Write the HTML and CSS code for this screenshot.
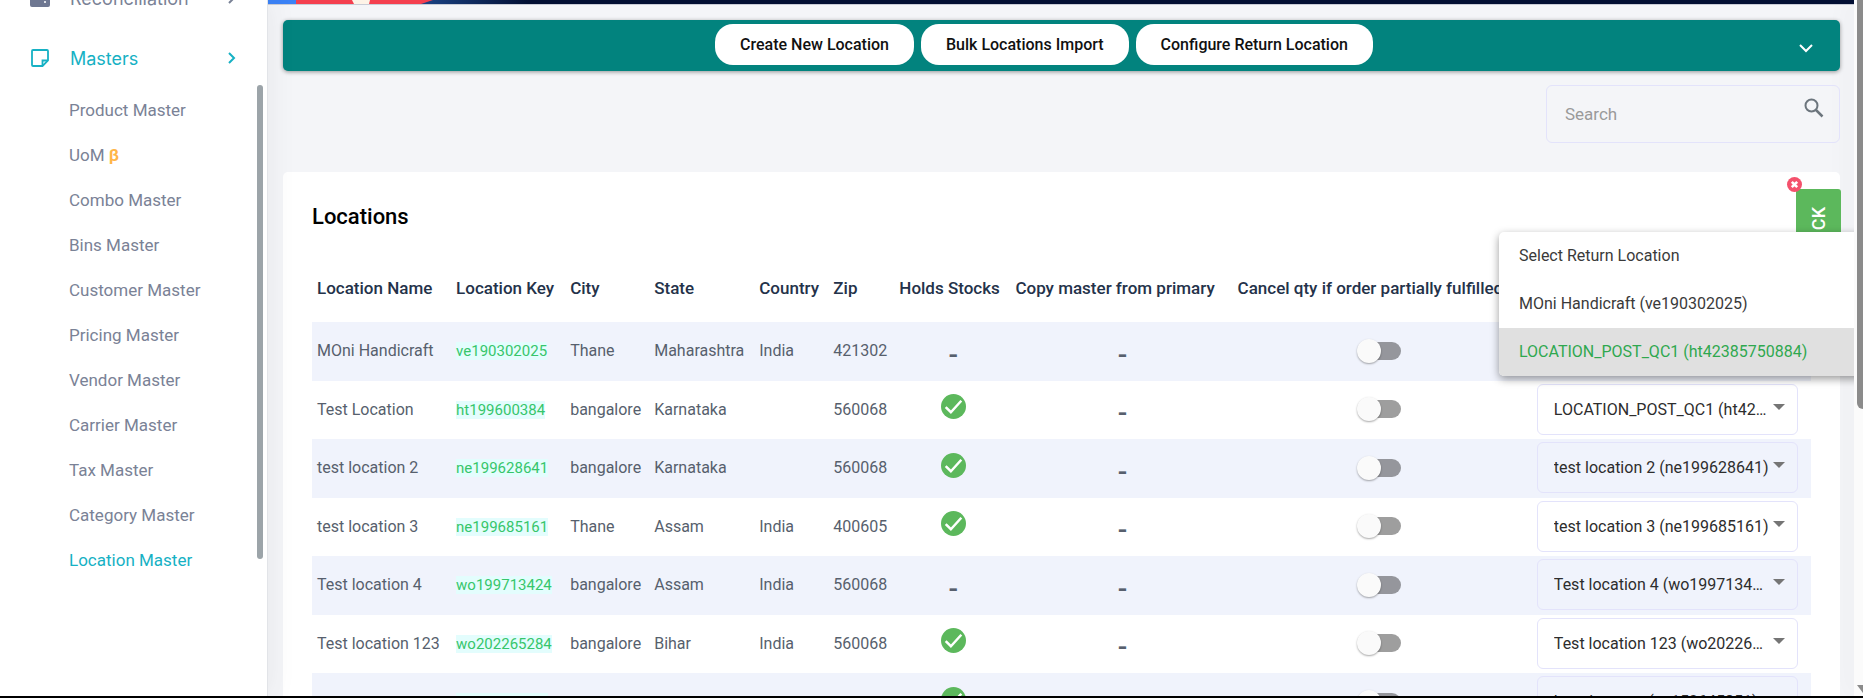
FILE: index.html
```
<!DOCTYPE html>
<html lang="en">
<head>
<meta charset="utf-8">
<title>Location Master</title>
<link rel="stylesheet" href="styles.css">
</head>
<body>
<svg class="defs" aria-hidden="true">
  <symbol id="ok" viewBox="0 0 24 24"><circle cx="12" cy="12" r="12" fill="#5cb85c"/><path d="M4.500 12.500l5 5L19.500 6.500" fill="none" stroke="#fff" stroke-width="2.400"/></symbol>
  <symbol id="caret" viewBox="0 0 12 6"><path d="M0 0h12L6 6z" fill="#757575"/></symbol>
</svg>
<div class="app">
  <aside class="sidebar">
    <nav class="nav">
      <a class="group" href="#">
        <svg class="group-icon" viewBox="0 0 20 20"><rect x="0" y="1" width="20" height="18" rx="2" fill="#6e7791"/><circle cx="15" cy="14" r="1" fill="#fff"/></svg>
        <span class="group-name">Reconciliation</span>
        <svg class="group-arrow" viewBox="0 0 8 12"><path d="M1 1l5 5-5 5" fill="none" stroke="currentColor" stroke-width="2"/></svg>
      </a>
      <a class="group group-open" href="#">
        <svg class="group-icon" viewBox="0 0 20 20"><path d="M3 2h14a1 1 0 0 1 1 1v9.500L12.500 18H3a1 1 0 0 1-1-1V3a1 1 0 0 1 1-1z" fill="none" stroke="currentColor" stroke-width="1.800"/><path d="M12.500 18v-5.500H18" fill="none" stroke="currentColor" stroke-width="1.800"/></svg>
        <span class="group-name">Masters</span>
        <svg class="group-arrow" viewBox="0 0 8 12"><path d="M1 1l5 5-5 5" fill="none" stroke="currentColor" stroke-width="2"/></svg>
      </a>
      <ul class="submenu">
        <li><a href="#">Product Master</a></li>
        <li><a href="#">UoM <b class="beta">β</b></a></li>
        <li><a href="#">Combo Master</a></li>
        <li><a href="#">Bins Master</a></li>
        <li><a href="#">Customer Master</a></li>
        <li><a href="#">Pricing Master</a></li>
        <li><a href="#">Vendor Master</a></li>
        <li><a href="#">Carrier Master</a></li>
        <li><a href="#">Tax Master</a></li>
        <li><a href="#">Category Master</a></li>
        <li><a class="current" href="#">Location Master</a></li>
      </ul>
    </nav>
    <div class="side-thumb"></div>
  </aside>
  <main class="main">
    <svg class="banner" viewBox="0 0 1586 4" preserveAspectRatio="xMinYMin slice">
      <defs><linearGradient id="sky"><stop offset="0" stop-color="#1c4588"/><stop offset="1" stop-color="#020f33"/></linearGradient></defs>
      <rect width="4000" height="4" fill="#020f33"/>
      <rect x="150" width="110" height="4" fill="url(#sky)"/>
      <path d="M28 0h137l-12 4H28z" fill="#f43f4f"/>
      <path d="M84 0h18l-1 4H86z" fill="#fdf3e7"/>
      <rect width="28" height="4" fill="#3b82f6"/>
    </svg>
    <div class="content">
      <div class="toolbar">
        <div class="actions">
          <button class="action" type="button">Create New Location</button>
          <button class="action" type="button">Bulk Locations Import</button>
          <button class="action" type="button">Configure Return Location</button>
        </div>
        <button class="toggle-bar" type="button" aria-label="Expand"><svg viewBox="0 0 14 9"><path d="M1 1l6 6 6-6" fill="none" stroke="#fff" stroke-width="2"/></svg></button>
      </div>
      <label class="search">
        <input type="text" placeholder="Search" aria-label="Search">
        <svg viewBox="0 0 20 20"><circle cx="7.500" cy="7.500" r="6" fill="none" stroke="#6c757d" stroke-width="2"/><path d="M12 12l6.500 6.500" stroke="#6c757d" stroke-width="2.500"/></svg>
      </label>
      <section class="card">
        <h1 class="title">Locations</h1>
        <table class="grid">
          <colgroup><col class="c-name"><col class="c-key"><col class="c-city"><col class="c-state"><col class="c-country"><col class="c-zip"><col class="c-holds"><col class="c-copy"><col class="c-cancel"><col class="c-return"></colgroup>
          <thead><tr><th>Location Name</th><th>Location Key</th><th>City</th><th>State</th><th>Country</th><th>Zip</th><th>Holds Stocks</th><th>Copy master from primary</th><th>Cancel qty if order partially fulfilled</th><th></th></tr></thead>
          <tbody>
            <tr><td>MOni Handicraft</td><td><span class="key">ve190302025</span></td><td>Thane</td><td>Maharashtra</td><td>India</td><td>421302</td><td class="mid"><span class="dash">-</span></td><td class="mid"><span class="dash">-</span></td><td class="mid"><input class="switch" type="checkbox" aria-label="Cancel partial orders"></td><td class="mid"><span class="pick"><select aria-label="Return location"><option>LOCATION_POST_QC1 (ht42385750884)</option></select><svg><use href="#caret"/></svg></span></td></tr>
            <tr><td>Test Location</td><td><span class="key">ht199600384</span></td><td>bangalore</td><td>Karnataka</td><td></td><td>560068</td><td class="mid"><svg class="ok"><use href="#ok"/></svg></td><td class="mid"><span class="dash">-</span></td><td class="mid"><input class="switch" type="checkbox" aria-label="Cancel partial orders"></td><td class="mid"><span class="pick"><select aria-label="Return location"><option>LOCATION_POST_QC1 (ht42385750884)</option></select><svg><use href="#caret"/></svg></span></td></tr>
            <tr><td>test location 2</td><td><span class="key">ne199628641</span></td><td>bangalore</td><td>Karnataka</td><td></td><td>560068</td><td class="mid"><svg class="ok"><use href="#ok"/></svg></td><td class="mid"><span class="dash">-</span></td><td class="mid"><input class="switch" type="checkbox" aria-label="Cancel partial orders"></td><td class="mid"><span class="pick"><select aria-label="Return location"><option>test location 2 (ne199628641)</option></select><svg><use href="#caret"/></svg></span></td></tr>
            <tr><td>test location 3</td><td><span class="key">ne199685161</span></td><td>Thane</td><td>Assam</td><td>India</td><td>400605</td><td class="mid"><svg class="ok"><use href="#ok"/></svg></td><td class="mid"><span class="dash">-</span></td><td class="mid"><input class="switch" type="checkbox" aria-label="Cancel partial orders"></td><td class="mid"><span class="pick"><select aria-label="Return location"><option>test location 3 (ne199685161)</option></select><svg><use href="#caret"/></svg></span></td></tr>
            <tr><td>Test location 4</td><td><span class="key">wo199713424</span></td><td>bangalore</td><td>Assam</td><td>India</td><td>560068</td><td class="mid"><span class="dash">-</span></td><td class="mid"><span class="dash">-</span></td><td class="mid"><input class="switch" type="checkbox" aria-label="Cancel partial orders"></td><td class="mid"><span class="pick"><select aria-label="Return location"><option>Test location 4 (wo199713424)</option></select><svg><use href="#caret"/></svg></span></td></tr>
            <tr><td>Test location 123</td><td><span class="key">wo202265284</span></td><td>bangalore</td><td>Bihar</td><td>India</td><td>560068</td><td class="mid"><svg class="ok"><use href="#ok"/></svg></td><td class="mid"><span class="dash">-</span></td><td class="mid"><input class="switch" type="checkbox" aria-label="Cancel partial orders"></td><td class="mid"><span class="pick"><select aria-label="Return location"><option>Test location 123 (wo202265284)</option></select><svg><use href="#caret"/></svg></span></td></tr>
            <tr><td></td><td><span class="key">ne152645851</span></td><td></td><td></td><td></td><td></td><td class="mid"><svg class="ok"><use href="#ok"/></svg></td><td class="mid"></td><td class="mid"><input class="switch" type="checkbox" aria-label="Cancel partial orders"></td><td class="mid"><span class="pick"><select aria-label="Return location"><option>location new (ne152645851)</option></select><svg><use href="#caret"/></svg></span></td></tr>
          </tbody>
        </table>
      </section>
    </div>
    <button class="side-tab" type="button">CK</button>
    <button class="close" type="button" aria-label="Close"><svg viewBox="0 0 15 15"><circle cx="7.500" cy="7.500" r="7.500" fill="#f4516c"/><path d="M4.800 4.800l5.400 5.400M10.200 4.800l-5.400 5.400" stroke="#fff" stroke-width="2.600"/></svg></button>
    <ul class="menu" role="listbox">
      <li role="option">Select Return Location</li>
      <li role="option">MOni Handicraft (ve190302025)</li>
      <li role="option" class="chosen" aria-selected="true">LOCATION_POST_QC1 (ht42385750884)</li>
    </ul>
  </main>
  <div class="scroll"><div class="scroll-thumb"></div><svg class="scroll-arrow" viewBox="0 0 12 8"><path d="M0 0h12L6 8z" fill="#8b8b8b"/></svg></div>
</div>
</body>
</html>
```
FILE: styles.css
```
* { box-sizing: border-box; }
body { margin: 0; font-family: Roboto, "Liberation Sans", sans-serif; font-size: 16px; color: #575f6d; }
button, input, select { font-family: inherit; }
a { text-decoration: none; color: inherit; }
ul { list-style: none; margin: 0; padding: 0; }
svg { display: block; }
.defs { position: absolute; width: 0; height: 0; }

.app { display: flex; height: 100vh; overflow: hidden; border-bottom: 2px solid #000; background: #f4f5f8; }

.sidebar { position: relative; z-index: 2; flex: none; width: 268px; background: #fff; border-right: 1px solid #e2e4e8; box-shadow: 0 0 28px rgba(60, 60, 60, 0.08); color: #7a8296; }
.nav { display: flex; flex-direction: column; margin-top: -32px; }
.group { display: flex; align-items: center; height: 60px; padding: 0 31px 0 30px; font: 400 18px Inter, sans-serif; }
.group-icon { width: 20px; height: 20px; }
.group-name { flex: 1; margin-left: 20px; }
.group-arrow { width: 8px; height: 12px; }
.group-open, .current { color: #16b1c4; }
.submenu { font-size: 17px; line-height: 45px; padding-left: 69px; }
.submenu a { display: block; }
.beta { color: #ffb648; }
.side-thumb { position: absolute; right: 4px; top: 85px; width: 6px; height: 474px; border-radius: 3px; background: #9ca4a9; }

.main { position: relative; flex: 1; min-width: 0; overflow: hidden; }
.banner { width: 100%; height: 5px; border-bottom: 1px solid #c9ccd6; }
.content { padding: 15px 14px 0 15px; }
.toolbar { display: flex; align-items: center; height: 51px; padding: 0 27px 0 0; border-radius: 5px; background: #02837e; box-shadow: 0 1px 4px rgba(0, 0, 0, 0.4); }
.actions { flex: 1; display: flex; justify-content: center; gap: 7px; padding: 0 0 2px 6px; }
.action { height: 41px; padding: 0 25px; border: 0; border-radius: 18px; background: #fff; color: #111; font-size: 16px; font-weight: 500; }
.toggle-bar { width: 14px; height: 9px; margin-top: 6px; padding: 0; border: 0; background: none; }
.search { position: relative; display: block; width: 294px; margin: 14px 0 29px auto; }
.search input { display: block; width: 100%; height: 58px; padding: 0 50px 0 18px; border: 1px solid #e3e3fb; border-radius: 6px; background: transparent; font-size: 17px; color: #575f6d; }
.search input::placeholder { color: #9a9a9a; }
.search svg { position: absolute; right: 16px; top: 13px; width: 20px; height: 20px; }

.card { padding: 29px; border-radius: 5px; background: #fff; }
.title { margin: 0; font-size: 22px; font-weight: 500; line-height: 32px; color: #000; }
.grid { width: 100%; margin-top: 20px; border-collapse: collapse; table-layout: fixed; }
.c-name { width: 140px; }
.c-key { width: 114px; }
.c-city { width: 84px; }
.c-state { width: 105px; }
.c-country { width: 74px; }
.c-zip { width: 66px; }
.c-holds { width: 116px; }
.c-copy { width: 222px; }
.c-cancel { width: 290px; }
.c-return { width: 287px; }
.grid th { height: 69px; padding: 0 4px; text-align: left; font-size: 17px; font-weight: 500; color: #24324a; white-space: nowrap; }
.grid td { height: 58px; padding: 0 4px 2px; white-space: nowrap; }
.grid th:first-child, .grid td:first-child { padding-left: 5px; }
.grid tbody tr:nth-child(odd) { background: #f0f3fc; }
.grid tbody tr:nth-child(odd) td { height: 59px; }
.grid .mid { text-align: center; }
.key { background: #e3fdfd; color: #36c66b; font-size: 15px; }
.dash { display: block; padding-top: 8px; font-size: 28px; font-weight: 500; line-height: 28px; }
.ok { width: 25px; height: 25px; margin: 0 auto 5px; }
.switch { appearance: none; position: relative; display: block; width: 44px; height: 24px; margin: 0 auto; }
.switch::before { content: ""; position: absolute; right: 0; top: 3px; width: 36px; height: 18px; border-radius: 9px; background: rgba(0, 0, 0, 0.38); }
.switch::after { content: ""; position: absolute; left: 0; top: 0; width: 24px; height: 24px; border-radius: 50%; background: #fafafa; box-shadow: 0 1px 2px rgba(0, 0, 0, 0.35); }
.pick { position: relative; display: block; width: 261px; margin: 0 auto; }
.pick select { appearance: none; display: block; width: 100%; height: 51px; padding: 0 26px 0 16px; border: 1px solid #e3e3fb; border-radius: 6px; background: transparent; color: #2d2d2d; font-size: 16px; text-overflow: ellipsis; overflow: hidden; white-space: nowrap; }
.pick svg { position: absolute; right: 13px; top: 20px; width: 12px; height: 6px; }

.side-tab { position: absolute; right: 13px; top: 189px; width: 45px; height: 80px; padding: 18px 0 0; border: 0; border-radius: 3px; background: #5cb85c; color: #fff; font-size: 18px; font-weight: 500; writing-mode: sideways-lr; text-align: right; }
.close { position: absolute; right: 52px; top: 177px; width: 15px; height: 15px; padding: 0; border: 0; background: none; }
.menu { position: absolute; left: calc(100% - 355px); top: 232px; width: 380px; border-radius: 5px; overflow: hidden; background: #fff; box-shadow: 0 3px 8px rgba(0, 0, 0, 0.4); color: #3a3a3a; line-height: 47px; }
.menu li { height: 48px; padding-left: 20px; }
.menu .chosen { background: #e0e0e0; color: #2fa84f; }

.scroll { flex: none; display: flex; flex-direction: column; justify-content: space-between; width: 9px; padding-left: 3px; overflow: hidden; background: #fbfbfb; box-shadow: 0 0 28px rgba(60, 60, 60, 0.08); }
.scroll-thumb { width: 12px; height: 409px; border-radius: 0 0 6px 6px; background: #8b8b8b; }
.scroll-arrow { width: 12px; height: 8px; margin-bottom: 3px; }
```
